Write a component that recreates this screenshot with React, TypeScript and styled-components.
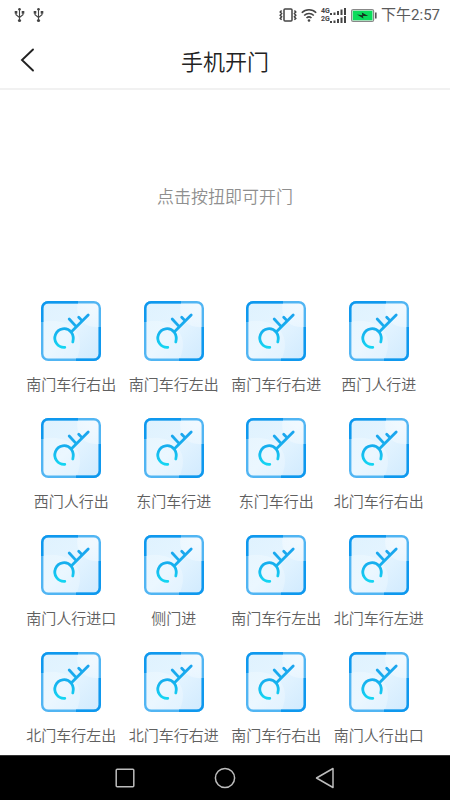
import React, { useId } from 'react';
import styled, { createGlobalStyle } from 'styled-components';

const GlobalStyle = createGlobalStyle`
  *, *::before, *::after { box-sizing: border-box; }
  body {
    margin: 0;
    background: #fff;
    font-family: Roboto, 'Noto Sans CJK SC', sans-serif;
    font-weight: 400;
  }
  button {
    margin: 0;
    padding: 0;
    border: 0;
    background: none;
    font: inherit;
    color: inherit;
    cursor: pointer;
  }
  svg { display: block; flex: none; }
`;

const Screen = styled.div`
  display: flex;
  flex-direction: column;
  min-height: 100vh;
  background: #fff;
`;

const StatusBar = styled.div`
  display: flex;
  align-items: center;
  justify-content: space-between;
  height: 30px;
  padding: 0 10px 0 14px;
  color: #444;
`;

const StatusGroup = styled.div<{ $gap: number }>`
  display: flex;
  align-items: center;
  gap: ${({ $gap }) => $gap}px;
`;

const Clock = styled.time`
  font-size: 15px;
  line-height: 20px;
  color: #5a5a5a;
  white-space: nowrap;
`;

const Header = styled.header`
  display: grid;
  grid-template-columns: 56px 1fr 56px;
  align-items: center;
  height: 60px;
  padding-top: 2px;
  border-bottom: 2px solid #f1f1f1;
`;

const BackButton = styled.button`
  display: flex;
  align-items: center;
  height: 44px;
  padding-left: 20px;
`;

const Title = styled.h1`
  margin: 0;
  font-family: 'Noto Sans CJK SC', sans-serif;
  font-size: 22px;
  line-height: 32px;
  font-weight: 350;
  text-align: center;
  color: #222;
`;

const Content = styled.main`
  flex: 1;
  padding: 94px 20px 10px;
  font-family: 'Noto Sans CJK SC', sans-serif;
`;

const Hint = styled.p`
  margin: 0 0 93px;
  font-size: 17px;
  line-height: 24px;
  font-weight: 350;
  text-align: center;
  color: #8f8f8f;
`;

const DoorGrid = styled.ul`
  display: grid;
  grid-template-columns: repeat(4, 1fr);
  row-gap: 24px;
  margin: 0;
  padding: 0;
  list-style: none;
`;

const DoorButton = styled.button`
  display: flex;
  flex-direction: column;
  align-items: center;
  gap: 13px;
  width: 100%;
`;

const DoorLabel = styled.span`
  font-size: 15px;
  line-height: 20px;
  font-weight: 350;
  color: #606060;
  white-space: nowrap;
`;

const NavBar = styled.nav`
  display: flex;
  align-items: center;
  justify-content: center;
  gap: 56px;
  height: 45px;
  border-top: 1px solid #333;
  background: #000;
`;

const NavButton = styled.button`
  display: flex;
  align-items: center;
  justify-content: center;
  width: 44px;
  height: 44px;
`;

const UsbIcon = () => (
  <svg width="11" height="16" viewBox="0 0 11 16" fill="none" stroke="currentColor" strokeWidth="1.1">
    <path d="M5.5 2v11M2 5.5v2.2l3.5 2.8L9 7.7V5.5" />
    <circle cx="5.5" cy="2.2" r="1.3" fill="currentColor" stroke="none" />
    <circle cx="5.5" cy="13.5" r="1.6" fill="currentColor" stroke="none" />
    <rect x="0.7" y="4" width="2.6" height="2.6" fill="currentColor" stroke="none" />
    <rect x="7.7" y="4" width="2.6" height="2.6" fill="currentColor" stroke="none" />
  </svg>
);

const VibrateIcon = () => (
  <svg width="18" height="14" viewBox="0 0 18 14" fill="none" stroke="currentColor" strokeWidth="1.5">
    <rect x="5" y="1" width="8" height="12" rx="1" />
    <path d="M2.6 2.5L1.2 4l1.4 1.6L1.2 7.2l1.4 1.6-1.4 1.6 1.4 1.4M15.4 2.5L16.8 4l-1.4 1.6 1.4 1.6-1.4 1.6 1.4 1.6-1.4 1.4" />
  </svg>
);

const WifiIcon = () => (
  <svg width="16" height="14" viewBox="0 0 16 14" fill="none" stroke="currentColor" strokeWidth="1.6">
    <path d="M0.8 4.8a10.2 10.2 0 0 1 14.4 0M3.2 7.5a6.8 6.8 0 0 1 9.6 0M5.5 10a3.6 3.6 0 0 1 5 0" />
    <circle cx="8" cy="12.5" r="1.3" fill="currentColor" stroke="none" />
  </svg>
);

const Networks = styled.div`
  display: grid;
  grid-template-columns: 9px 16px;
  row-gap: 1px;
  margin-right: 1px;
  font-size: 7px;
  line-height: 7px;
  font-weight: 700;
`;

const SignalBars = () => (
  <svg width="16" height="7" viewBox="0 0 16 7" fill="currentColor">
    <path d="M0 5h2v2H0zM3.5 4.5h2V7h-2zM7 3h2v4H7zM10.5 1.5h2V7h-2zM14 0h2v7h-2z" />
  </svg>
);

const BatteryIcon = () => (
  <svg width="26" height="13" viewBox="0 0 26 13">
    <rect x="0.6" y="0.6" width="22" height="11.8" rx="1.5" fill="#fff" stroke="#888" strokeWidth="1.2" />
    <rect x="1.7" y="1.7" width="19.8" height="9.6" fill="#0bdc5b" />
    <path d="M24 3.5h1.6v6H24z" fill="#555" />
    <path d="M6 5.6l5.3 .6L10.8 3.6l6.4 3.5-5.2-.2.4 2.6z" fill="#15331f" />
  </svg>
);

const BackIcon = () => (
  <svg width="15" height="24" viewBox="0 0 15 24" fill="none" stroke="#222" strokeWidth="1.9" strokeLinecap="round">
    <path d="M13 1.5L2 12l11 10.5" />
  </svg>
);

const KeyIcon = () => {
  const id = useId();
  return (
    <svg width="60" height="60" viewBox="0 0 60 60" fill="none">
      <defs>
        <linearGradient id={`${id}-face`} x1="0" y1="0" x2="60" y2="60" gradientUnits="userSpaceOnUse">
          <stop offset="0" stopColor="#dff2fe" />
          <stop offset="0.5" stopColor="#e4f4ff" />
          <stop offset="1" stopColor="#d0eafe" />
        </linearGradient>
        <linearGradient id={`${id}-shine`} x1="60" y1="0" x2="36" y2="30" gradientUnits="userSpaceOnUse">
          <stop offset="0" stopColor="#fff" stopOpacity="0.55" />
          <stop offset="1" stopColor="#fff" stopOpacity="0.2" />
        </linearGradient>
        <linearGradient id={`${id}-key`} x1="0" y1="13" x2="0" y2="47" gradientUnits="userSpaceOnUse">
          <stop offset="0" stopColor="#1ca4ee" />
          <stop offset="0.5" stopColor="#16b0ee" />
          <stop offset="1" stopColor="#14d6f2" />
        </linearGradient>
        <clipPath id={`${id}-clip`}>
          <rect x="1" y="1" width="58" height="58" rx="6" />
        </clipPath>
      </defs>
      <rect x="1" y="1" width="58" height="58" rx="6" fill={`url(#${id}-face)`} />
      <g clipPath={`url(#${id}-clip)`}>
        <path d="M37 0h23v26C44 28 33 18 37 0z" fill={`url(#${id}-shine)`} />
        <path d="M0 21c20-5 39 4 39 23 0 6-2 11-4 16H0z" fill="#fff" fillOpacity="0.25" />
      </g>
      <rect x="1.2" y="1.2" width="57.6" height="57.6" rx="6" stroke="#51b5f3" strokeWidth="2.4" />
      <path d="M1.2 21V7.2a6 6 0 0 1 6-6H37M58.8 26v26.8a6 6 0 0 1-6 6H35" stroke="#0e98ee" strokeWidth="2.4" />
      <g stroke={`url(#${id}-key)`} strokeWidth="2.8" strokeLinecap="round" strokeLinejoin="round">
        <path d="M23.8 46.3A9.3 9.3 0 1 1 30.2 31Q33.3 35.5 31.8 41" />
        <path d="M30.2 31L47.2 14M28.2 18l6.8 7.4M37.7 16.2l3.5 3.7" />
      </g>
    </svg>
  );
};

const RecentsIcon = () => (
  <svg width="20" height="20" viewBox="0 0 20 20" fill="none" stroke="#bdbdbd" strokeWidth="1.5">
    <rect x="1.2" y="1.2" width="17.6" height="17.6" rx="1" />
  </svg>
);

const HomeIcon = () => (
  <svg width="22" height="22" viewBox="0 0 22 22" fill="none" stroke="#bdbdbd" strokeWidth="1.5">
    <circle cx="11" cy="11" r="9.6" />
  </svg>
);

const NavBackIcon = () => (
  <svg width="20" height="22" viewBox="0 0 20 22" fill="none" stroke="#bdbdbd" strokeWidth="1.5" strokeLinejoin="round">
    <path d="M18 1.5v19L1.5 11z" />
  </svg>
);

const doors = [
  '南门车行右出', '南门车行左出', '南门车行右进', '西门人行进',
  '西门人行出', '东门车行进', '东门车行出', '北门车行右出',
  '南门人行进口', '侧门进', '南门车行左出', '北门车行左进',
  '北门车行左出', '北门车行右进', '南门车行右出', '南门人行出口',
];

export default function App() {
  return (
    <Screen>
      <GlobalStyle />
      <StatusBar>
        <StatusGroup $gap={8}>
          <UsbIcon />
          <UsbIcon />
        </StatusGroup>
        <StatusGroup $gap={4}>
          <VibrateIcon />
          <WifiIcon />
          <Networks>
            <span>4G</span>
            <SignalBars />
            <span>2G</span>
            <SignalBars />
          </Networks>
          <BatteryIcon />
          <Clock dateTime="14:57">下午2:57</Clock>
        </StatusGroup>
      </StatusBar>
      <Header>
        <BackButton type="button" aria-label="返回">
          <BackIcon />
        </BackButton>
        <Title>手机开门</Title>
      </Header>
      <Content>
        <Hint>点击按扭即可开门</Hint>
        <DoorGrid>
          {doors.map((name, index) => (
            <li key={index}>
              <DoorButton type="button">
                <KeyIcon />
                <DoorLabel>{name}</DoorLabel>
              </DoorButton>
            </li>
          ))}
        </DoorGrid>
      </Content>
      <NavBar>
        <NavButton type="button" aria-label="最近任务">
          <RecentsIcon />
        </NavButton>
        <NavButton type="button" aria-label="主屏幕">
          <HomeIcon />
        </NavButton>
        <NavButton type="button" aria-label="后退">
          <NavBackIcon />
        </NavButton>
      </NavBar>
    </Screen>
  );
}
